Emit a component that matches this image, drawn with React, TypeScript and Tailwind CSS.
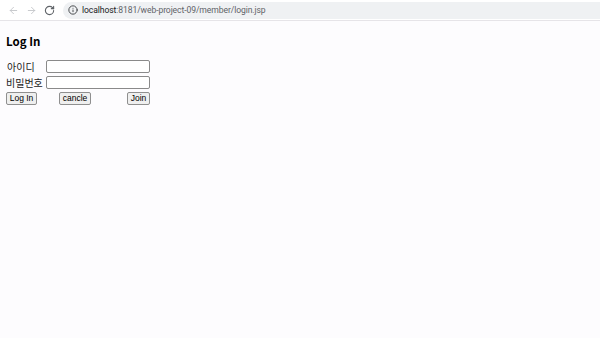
import { ArrowLeft, ArrowRight, RotateCw, Info } from "lucide-react";

const App = () => {
  return (
    <div className="h-[338px] w-[600px] overflow-hidden bg-[#fdfcfe] font-['Roboto','Noto_Sans_CJK_KR',sans-serif] text-black">
      {/* Browser toolbar */}

      <div className="flex h-[21px] items-center border-b border-[#e6e4e8] bg-white">
        <div className="flex w-[63px] items-center gap-[7px] pl-[8px] text-[#c4c6c9]">
          <ArrowLeft size={11} strokeWidth={2} />
          <ArrowRight size={11} strokeWidth={2} />
          <RotateCw size={11} strokeWidth={2.4} className="text-[#5f6368]" />
        </div>

        <div className="flex h-[17px] flex-1 items-center gap-[4px] rounded-l-full bg-[#eff1f3] pl-[5px]">
          <Info size={10} strokeWidth={2.2} className="text-[#3c4043]" />
          <span className="text-[8.6px] tracking-[-0.1px] text-[#5f6368]">
            <span className="text-[#202124]">localhost</span>
            :8181/web-project-09/member/login.jsp
          </span>
        </div>
      </div>

      {/* Page */}

      <div className="px-[6px] pt-[12px] font-['Noto_Sans_CJK_KR','Liberation_Sans',sans-serif]">
        <h1 className="text-[11.5px] font-bold leading-[16px]">
          Log In
        </h1>

        <div className="mt-[11px] grid grid-cols-[40px_104px] gap-y-[3px] text-[10px] leading-[13px] text-[#222]">
          <label className="pl-[1px]">아이디</label>
          <input
            type="text"
            className="h-[13px] rounded-[2px] border border-[#8a8a8a] bg-white"
          />

          <label>비밀번호</label>
          <input
            type="password"
            className="h-[13px] rounded-[2px] border border-[#8a8a8a] bg-white"
          />
        </div>

        <div className="mt-[3px] flex w-[144px] items-center font-['Liberation_Sans',sans-serif] text-[8.5px]">
          <button className="h-[13px] w-[31px] rounded-[2px] border border-[#8f8f8f] bg-[#efefef] leading-none">
            Log In
          </button>

          <button className="ml-[22px] h-[13px] w-[32px] rounded-[2px] border border-[#8f8f8f] bg-[#efefef] leading-none">
            cancle
          </button>

          <button className="ml-auto h-[13px] w-[23px] rounded-[2px] border border-[#8f8f8f] bg-[#efefef] leading-none">
            Join
          </button>
        </div>
      </div>
    </div>
  );
};

export default App;
